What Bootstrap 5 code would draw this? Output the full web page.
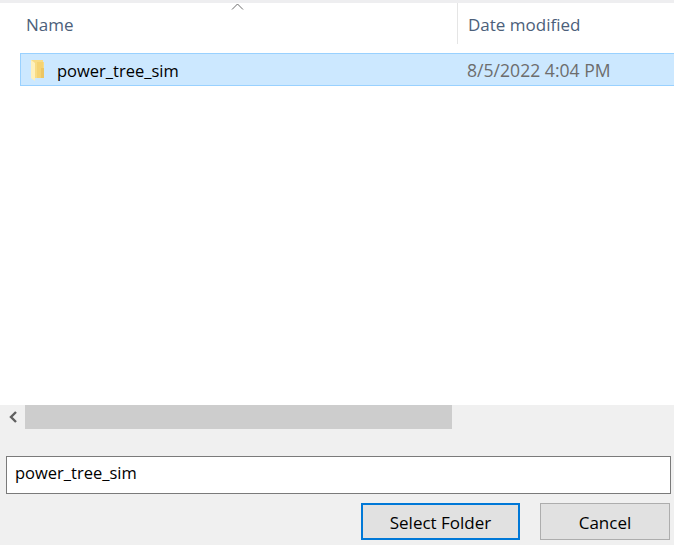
<!DOCTYPE html>
<html lang="en"><head><meta charset="utf-8"><title>Select Folder</title>
<link rel="stylesheet" href="https://cdn.jsdelivr.net/npm/bootstrap@5.3.0/dist/css/bootstrap.min.css">
<style>
html,body{height:100%;overflow:hidden}
body{font-family:"Open Sans","Noto Sans",sans-serif;font-size:17px;background:#f0f0f0;color:#000}
.dlg{width:674px;height:545px}
.listpane{height:405px;background:#fff;border-top:3px solid #eeeef0;flex:none}
.headrow{height:41px;color:#4c607a}
.hname{width:457px;padding:3px 0 0 26px;position:relative;align-self:stretch;display:flex;align-items:center}
.hdate{flex:1;padding:3px 0 0 10px;border-left:1px solid #e5e5e5;align-self:stretch;display:flex;align-items:center}
.sortcaret{position:absolute;left:231px;top:0;display:block}
.filerow{margin:9px 0 0 20px;height:33px;background:#cce8ff;border:1px solid #99d1ff;border-right:0}
.ficon{margin-left:9px;width:15px;height:22px;flex:none}
.fname{width:397px;margin-left:12px;flex:none;font-size:16.5px;padding-top:3px}
.fdate{color:#6d6d6d;margin-left:13px;font-size:17.6px;padding-top:2px}
.hscroll{height:24px;background:#f0f0f0;flex:none}
.hleft{width:25px;flex:none}
.hthumb{width:427px;background:#cdcdcd}
.nameinput{margin:27px 3px 0 6px;height:38px;border:1px solid #7a7a7a;background:#fff;padding:0 8px 5px;font-size:16.5px;border-radius:0;color:#000;display:block;width:665px;font-family:inherit;outline:0}
.btnrow{margin-top:9px;padding-right:4px;gap:20px}
.dbtn{height:37px;background:#e1e1e1;border:1px solid #adadad;border-radius:0;font-size:17px;color:#000;padding:2px 0 0;font-family:inherit;line-height:1}
.dbtn-main{width:159px;border:2px solid #0078d7}
.dbtn-alt{width:130px}
</style></head><body>
<div class="dlg d-flex flex-column">
  <div class="listpane">
    <div class="headrow d-flex align-items-center">
      <div class="hname">Name
        <svg class="sortcaret" width="13" height="8" viewBox="0 0 13 8"><path d="M1 6.5 6.5 1 12 6.5" fill="none" stroke="#6d6d6d" stroke-width="1"/></svg>
      </div>
      <div class="hdate">Date modified</div>
    </div>
    <div class="filerow d-flex align-items-center">
      <svg class="ficon" viewBox="0 0 15 22"><path d="M1 1h12v2h1v16H4z" fill="#f8dc86"/><path d="M7 3h6v16H7z" fill="#f5d373"/><path d="M11 9h3v10h-3z" fill="#edc663"/><path d="M1 1l4 3v18l-4-3z" fill="#fef0bc"/></svg>
      <span class="fname">power_tree_sim</span>
      <span class="fdate">8/5/2022 4:04 PM</span>
    </div>
  </div>
  <div class="hscroll d-flex">
    <div class="hleft d-flex align-items-center justify-content-center">
      <svg width="10" height="12" viewBox="0 0 10 12"><path d="M8 1 3 6l5 5" fill="none" stroke="#606060" stroke-width="2.4"/></svg>
    </div>
    <div class="hthumb"></div>
  </div>
  <input class="nameinput" type="text" value="power_tree_sim" aria-label="Folder">
  <div class="btnrow d-flex justify-content-end">
    <button type="button" class="btn dbtn dbtn-main">Select Folder</button>
    <button type="button" class="btn dbtn dbtn-alt">Cancel</button>
  </div>
</div>
</body></html>
